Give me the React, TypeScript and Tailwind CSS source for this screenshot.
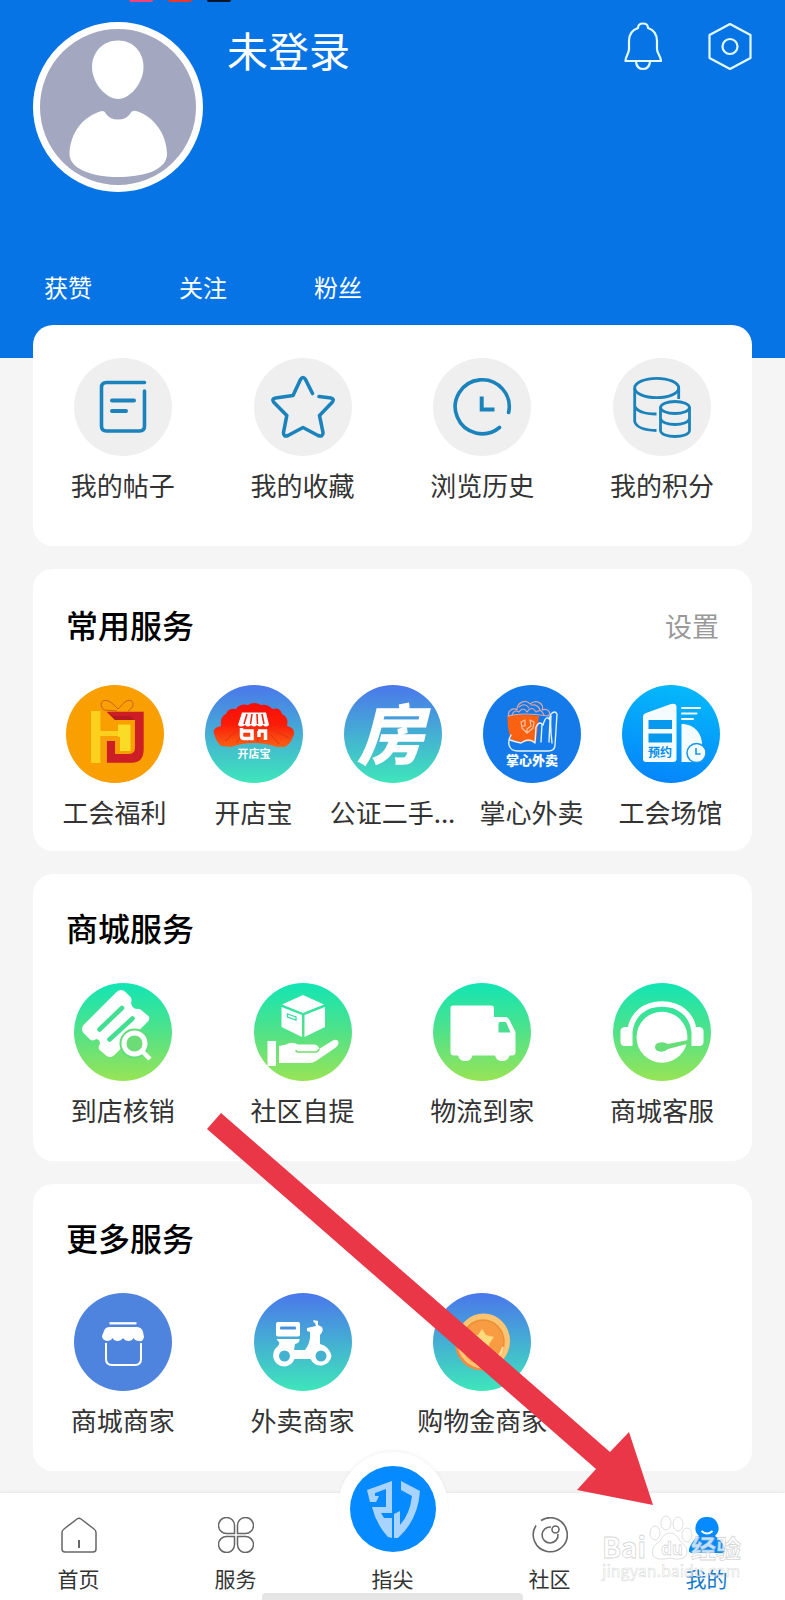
import React from 'react';

type Service = {
    name: string;
    icon: React.ReactNode;
};

const PostIcon = () => (
    <svg viewBox="0 0 98 98" className="size-[98px]" fill="none" stroke="#1b83bb" strokeWidth="3.6" strokeLinecap="round">
        <circle cx="49" cy="49" r="49" fill="#efefef" stroke="none" />
        <path d="M70.5 24.5H32.5Q27.5 24.5 27.5 29.5V68Q27.5 73 32.5 73H65.5Q70.5 73 70.5 68V33" />
        <path d="M38 42.5H60M38 53H52" strokeWidth="4" />
    </svg>
);

const StarIcon = () => (
    <svg viewBox="0 0 98 98" className="size-[98px]" fill="none" stroke="#1b83bb" strokeWidth="3.6" strokeLinecap="round" strokeLinejoin="round">
        <circle cx="49" cy="49" r="49" fill="#efefef" stroke="none" />
        <path d="M58.5 35.5L51.5 21.5Q49 17.5 46.5 21.5L39 37.5L21.5 40Q17 41 20 44.5L32.8 57.5L29.5 74.5Q29.5 79.5 34 77.5L49 69.5L64 77.5Q69 79.5 69 74.5L65.5 57.5L78 44.5Q81 41 77 40L65 38.5" />
    </svg>
);

const HistoryIcon = () => (
    <svg viewBox="0 0 98 98" className="size-[98px]" fill="none" stroke="#1b83bb" strokeWidth="3.6" strokeLinecap="round">
        <circle cx="49" cy="49" r="49" fill="#efefef" stroke="none" />
        <path d="M75.6 54.5A27 27 0 1 0 66.5 69.5" />
        <path d="M48.7 38.5V51.5H61.5" strokeLinecap="butt" strokeWidth="4" />
    </svg>
);

const PointsIcon = () => (
    <svg viewBox="0 0 98 98" className="size-[98px]" fill="none" stroke="#1b83bb" strokeWidth="2.8">
        <circle cx="49" cy="49" r="49" fill="#efefef" stroke="none" />
        <ellipse cx="43.7" cy="30" rx="22" ry="9.7" />
        <path d="M21.7 30V63.5Q24 72 43.5 72.5M21.7 48Q25 56 43.5 56M65.7 30V41" />
        <ellipse cx="62" cy="49.5" rx="14.5" ry="6" />
        <path d="M47.5 49.5V72.5C48 80.5 76 80.5 76.5 72.5V49.5M47.5 60.5C49 68.5 75 68.5 76.5 60.5" />
    </svg>
);

const WelfareIcon = () => (
    <svg viewBox="0 0 98 98" className="size-[98px]">
        <circle cx="49" cy="49" r="49" fill="#fa9f02" />
        <path d="M51 26L38 25C34 21 34 16 39 15.5C44 15 49 21 52 24C56 20 60 14 65 15.5C69 18 67 23 62 26" fill="none" stroke="#c8611a" strokeWidth="1" />
        <path d="M25 26H34.5V46H52V51H34.5V78H25Z" fill="#fcd01d" />
        <path d="M40.7 26.7H77.7V64Q77.7 77.7 66 77.7H40.7V56H49V69H62Q69 69 69 63V35H49Z" fill="#cc1e24" />
        <path d="M34.5 51H41V78L34.5 75Z" fill="#f3a30e" opacity=".7" />
        <path d="M52 39.5H64.5V66H54V52H52Z" fill="#fadb25" />
        <path d="M40.7 26.7L49 35H69L64 31H47Z" fill="#9e151c" opacity=".45" />
    </svg>
);

const ShopBaoIcon = () => (
    <svg viewBox="0 0 98 98" className="size-[98px]">
        <defs>
            <linearGradient id="skyMint" x2="0" y2="1">
                <stop stopColor="#4b77eb" />
                <stop offset="1" stopColor="#3ee6ba" />
            </linearGradient>
            <linearGradient id="shell" x2="0" y2="1">
                <stop stopColor="#f90d05" />
                <stop offset=".5" stopColor="#fb1d08" />
                <stop offset="1" stopColor="#fb6214" />
            </linearGradient>
        </defs>
        <circle cx="49" cy="49" r="49" fill="url(#skyMint)" />
        <path d="M16 61C11 56 10 52 8.5 46Q10 42 16 41Q15 31 21 29Q23 23 31 24Q35 18 43 20Q49 16 56 20Q63 19 67 24Q75 22 77 29Q84 32 82 41Q90 43 89 49Q86 59 80 62L72 62Q48 54 26 62Z" fill="url(#shell)" />
        <path d="M20 56L33 45M31 58L38 50M66 50L74 59M68 45L84 53M53 57L52 50M44 57L46 51" stroke="#d93611" strokeWidth="1" />
        <path d="M37 27.5H61L64 40Q61 43 58 40Q55 43 52 40Q49 43 46 40Q43 43 40 40Q36 43 33 40Z" fill="#fff" />
        <path d="M42 29L39 39M47 29L45.5 39M52 29L52.5 39M57 29L59 39" stroke="#ec2716" strokeWidth="1.6" />
        <path d="M36.5 43V51Q36.5 53.5 39 53.5H47V46H37M53 46H60.5V55M54 46V52" fill="none" stroke="#fff" strokeWidth="3.5" />
        <text x="49" y="73" textAnchor="middle" fill="#fff" fontSize="11" fontWeight="700">开店宝</text>
    </svg>
);

const HouseIcon = () => (
    <svg viewBox="0 0 98 98" className="size-[98px]">
        <circle cx="49" cy="49" r="49" fill="url(#skyMint)" />
        <text x="46" y="74" textAnchor="middle" fill="#fff" fontSize="66" fontWeight="900" fontStyle="italic">房</text>
    </svg>
);

const TakeoutIcon = () => (
    <svg viewBox="0 0 98 98" className="size-[98px]" fill="none" strokeLinejoin="round" strokeLinecap="round">
        <circle cx="49" cy="49" r="49" fill="#147ae9" />
        <path d="M24.5 31Q39 28 56 31L53 57Q44 56 38 57L28 55Q24 43 24.5 31Z" fill="#fb6111" />
        <g stroke="#d9a7a5" strokeWidth="1.2">
            <path d="M26 31C24 26 30 22 34 25C34 17 43 14 47 19C54 13 62 20 59 25C65 23 69 28 65 31" />
            <path d="M29 30Q31 24 36 27Q40 21 44 27Q49 20 53 27Q58 23 61 30M36 22Q42 17 46 23M48 20Q55 19 57 25" />
            <path d="M25 31Q40 27 65 31" />
        </g>
        <path d="M42 35L38 37L39 43L44 48L50 43L51 37L47 35M42 35V41H39M47 35L48 41L44 44V48" stroke="#f5c5a6" strokeWidth="1.2" />
        <path d="M28 50C24 57 25 66 35 66H65Q72 66 72 60L74 29Q72 25 68 29L66 34M27 55Q33 57 38 58Q46 52 52 58L53 42Q56 36 59 39L58 57M60 40Q63 29 67 35L66 57M68 31Q67 43 69 58" stroke="#e3f2ff" strokeWidth="1.4" />
        <text x="49" y="80" textAnchor="middle" fill="#fff" fontSize="13" fontWeight="900">掌心外卖</text>
    </svg>
);

const VenueIcon = () => (
    <svg viewBox="0 0 98 98" className="size-[98px]">
        <defs>
            <linearGradient id="venue" x1=".6" x2=".4" y2="1">
                <stop stopColor="#05b9fa" />
                <stop offset="1" stopColor="#0585fb" />
            </linearGradient>
        </defs>
        <circle cx="49" cy="49" r="49" fill="url(#venue)" />
        <path d="M21 32Q21 29 24 28L49 19Q54.5 18 54.5 22V74Q54.5 77 51 77H24Q21 77 21 74Z" fill="#f4fcff" />
        <path d="M26.5 35H50V44H26.5ZM26.5 48.5H50V57.5H26.5Z" fill="#0799ee" />
        <path d="M60 23H78M60 28.500H74.500M60 34H71" stroke="#f4fcff" strokeWidth="2" strokeLinecap="round" />
        <path d="M59.5 39C72 39 80 48 80 60V77H59.5Z" fill="#f4fcff" />
        <circle cx="74.5" cy="68" r="9.5" fill="#f4fcff" stroke="#1597ee" strokeWidth="1.5" />
        <path d="M74 63V69H78.5" fill="none" stroke="#1597ee" strokeWidth="1.6" />
        <text x="38" y="72" textAnchor="middle" fill="#078eeb" fontSize="12" fontWeight="700">预约</text>
    </svg>
);

const TicketIcon = () => (
    <svg viewBox="0 0 98 98" className="size-[98px]" strokeLinecap="round" strokeLinejoin="round">
        <defs>
            <linearGradient id="lime" x2="0" y2="1">
                <stop stopColor="#12e5b5" />
                <stop offset=".5" stopColor="#51e288" />
                <stop offset="1" stopColor="#98e455" />
            </linearGradient>
        </defs>
        <circle cx="49" cy="49" r="49" fill="url(#lime)" />
        <path d="M43 10Q47 6 51 10L56 15Q57 17 56 20Q57 26 62 27Q66 26 68 29L74 34Q75 36 73 38L39 72Q36 74 33 72L26 66Q25 64 27 61Q27 55 22 55Q18 58 16 55L10 49Q8 46 10 43Z" fill="#fff" stroke="#fff" strokeWidth="2" />
        <path d="M48 25L25.5 46.5M58.500 35.500L35.500 56.500" stroke="#42df92" strokeWidth="4.6" />
        <circle cx="60.5" cy="60.5" r="15" fill="#62dd79" />
        <circle cx="60.5" cy="60.5" r="10.5" fill="#6bdc76" stroke="#fff" strokeWidth="5" />
        <path d="M69 69L76 76" stroke="#fff" strokeWidth="4.5" strokeLinecap="butt" />
    </svg>
);

const PickupIcon = () => (
    <svg viewBox="0 0 98 98" className="size-[98px]">
        <circle cx="49" cy="49" r="49" fill="url(#lime)" />
        <path d="M49 12L70 21.5L49 30L28 21.5ZM27.5 24L48 32V54L27.5 44ZM71 24L50.5 32V54L71 44Z" fill="#fff" />
        <path d="M33.5 31L42 34V37L33.5 34Z" fill="none" stroke="#35db9c" strokeWidth="1.3" />
        <path d="M13.5 58H22V83H13.5Z" fill="#fff" />
        <path d="M25 63L32 61.5Q38 58 44 61.5H60Q65 62 65 66L78 58Q83 55 84.5 59Q85 62 81 65L62 78Q59 80 55 80H25Z" fill="#fff" />
        <path d="M42 67Q42 69 44 69H62Q65 68 65 66" fill="none" stroke="#6fdf6c" strokeWidth="1.5" />
    </svg>
);

const TruckIcon = () => (
    <svg viewBox="0 0 98 98" className="size-[98px]">
        <circle cx="49" cy="49" r="49" fill="url(#lime)" />
        <path d="M20 22.5H58Q61 22.5 61 25.5V34H72Q75 34 76.5 37L81 46Q82.5 48 82.5 50V69Q82.5 72.5 79 72.5H76.5A7.5 7.5 0 0 1 62 72.5H39.5A7.5 7.5 0 0 1 25 72.5H21Q17.5 72.5 17.5 69V25Q17.5 22.5 20 22.5Z" fill="#fff" />
        <path d="M67 39H73L77.5 49.5H65.5V41Q65.5 39 67 39Z" fill="#48df90" />
    </svg>
);

const SupportIcon = () => (
    <svg viewBox="0 0 98 98" className="size-[98px]">
        <circle cx="49" cy="49" r="49" fill="url(#lime)" />
        <path d="M17 48C19 31 32 21 49 21S79 31 81 48" fill="none" stroke="#fff" strokeWidth="5.5" />
        <path d="M19.5 44V63H11Q7.500 62 7.500 59V48Q7.500 45 11 44ZM78.500 44V63H87Q90.500 62 90.500 59V48Q90.500 45 87 44Z" fill="#fff" />
        <circle cx="49" cy="54.3" r="25.5" fill="#fff" />
        <path d="M75 57L55 61Q50 58 45 60Q42 61 42 64T45 68Q51 70 55 66L74 61Z" fill="#68de79" />
    </svg>
);

const StallIcon = () => (
    <svg viewBox="0 0 98 98" className="size-[98px]" fill="none">
        <circle cx="49" cy="49" r="49" fill="#4f84de" />
        <path d="M35.5 30.3H62.5" stroke="#fff" strokeWidth="2.3" />
        <path d="M36 34H62Q68 34 69 39L70 44Q69 49 65 48Q61 48 59.5 45Q58 48 54.5 48Q51 48 49 45Q47 48 43.5 48Q40 48 38.5 45Q37 48 33 48Q28 47 28 43L30 38Q31 34 36 34Z" fill="#fff" />
        <path d="M32 50V66Q32 72 38 72H61Q67 72 67 66V50" stroke="#fff" strokeWidth="2" />
    </svg>
);

const ScooterIcon = () => (
    <svg viewBox="0 0 98 98" className="size-[98px]">
        <circle cx="49" cy="49" r="49" fill="url(#skyMint)" />
        <rect x="22" y="29" width="24" height="14.5" rx="2" fill="#fff" />
        <rect x="26" y="33.5" width="16" height="3" rx="1" fill="#4492de" />
        <path d="M22.5 46H45.5Q46 50 41 51L40 57H51Q55 52 56 45V39L53 38V35L62 33L61 30L59.500 29V27L64 28V32L68 34Q70 38 66 42V51Q75 53 77.500 63A11 11 0 0 1 56.500 66H40.500A11 11 0 1 1 23 54Q27 50 24 48Z" fill="#fff" />
        <circle cx="30.5" cy="63" r="5.5" fill="#43b2d0" />
        <circle cx="67" cy="63" r="5.5" fill="#43b2d0" />
    </svg>
);

const CoinIcon = () => (
    <svg viewBox="0 0 98 98" className="size-[98px]">
        <circle cx="49" cy="49" r="49" fill="url(#skyMint)" />
        <ellipse cx="49" cy="50" rx="27" ry="27.5" fill="#f18c42" />
        <ellipse cx="50.5" cy="48" rx="26.5" ry="27.5" fill="#fdc572" />
        <ellipse cx="50" cy="49" rx="21" ry="22" fill="#f89c43" stroke="#ec8e36" strokeWidth="1.5" />
        <path d="M49 36L53 42L61 44L56 51L57 59L49 56L41 59L42 51L37 44L45 42Z" fill="#ffda7b" />
        <path d="M70 54Q68 63 60 68" fill="none" stroke="#ffe4a0" strokeWidth="2" />
    </svg>
);

const shortcuts: Service[] = [
    { name: '我的帖子', icon: <PostIcon /> },
    { name: '我的收藏', icon: <StarIcon /> },
    { name: '浏览历史', icon: <HistoryIcon /> },
    { name: '我的积分', icon: <PointsIcon /> },
];

const common: Service[] = [
    { name: '工会福利', icon: <WelfareIcon /> },
    { name: '开店宝', icon: <ShopBaoIcon /> },
    { name: '公证二手...', icon: <HouseIcon /> },
    { name: '掌心外卖', icon: <TakeoutIcon /> },
    { name: '工会场馆', icon: <VenueIcon /> },
];

const mall: Service[] = [
    { name: '到店核销', icon: <TicketIcon /> },
    { name: '社区自提', icon: <PickupIcon /> },
    { name: '物流到家', icon: <TruckIcon /> },
    { name: '商城客服', icon: <SupportIcon /> },
];

const more: Service[] = [
    { name: '商城商家', icon: <StallIcon /> },
    { name: '外卖商家', icon: <ScooterIcon /> },
    { name: '购物金商家', icon: <CoinIcon /> },
];

const ServiceButton = ({ name, icon }: Service) => (
    <button type="button" className="flex flex-col items-center gap-[13px]">
        {icon}
        <span className="whitespace-nowrap text-[26px] leading-8 text-[#333]">{name}</span>
    </button>
);

const Header = () => (
    <header className="bg-[#0774e6] px-[33px] pb-[55px] text-white">
        <div className="flex h-[22px] items-start gap-[15px] pl-24">
            <span className="h-[2px] w-6 rounded-b bg-[#f0437a]" />
            <span className="h-[2px] w-6 rounded-b bg-[#e23a30]" />
            <span className="h-[2px] w-6 rounded-b bg-[#06142c]" />
        </div>
        <div className="flex items-start">
            <svg viewBox="0 0 170 170" className="size-[170px]" role="img" aria-label="头像">
                <circle cx="85" cy="85" r="81.500" fill="#a3a8c0" stroke="#fff" strokeWidth="7" />
                <path d="M85 18.500C101 18.500 110.500 31 110.500 45C110.500 61 97 77 85 77S59 61 59 45C59 31 69 18.500 85 18.500Z" fill="#fff" />
                <path d="M69 89Q72 89 73 92Q77 97.500 85 97.500T97 92Q99 88 103 89C121 94 134 113 134 132C134 149 108 155 85 155S36.500 148 36.500 132C37 111 50 94 69 89Z" fill="#fff" />
            </svg>
            <h1 className="ml-6 mt-[2px] text-[41px] leading-[50px] font-normal">未登录</h1>
            <div className="ml-auto flex gap-[46px]">
                <button type="button" aria-label="通知">
                    <svg viewBox="0 0 38 49" className="h-[49px] w-[38px]" fill="none" stroke="#e4fbff" strokeWidth="2.2" strokeLinejoin="round">
                        <path d="M14 6Q14 1.500 19 1.500T24 6C30 8 33 13 33 19V27C33 32 37 34 37 39H1.500C1.500 34 5 32 5 27V19C5 13 8 8 14 6Z" />
                        <path d="M12 40Q13 47 19 47T26 40" />
                    </svg>
                </button>
                <button type="button" aria-label="设置">
                    <svg viewBox="0 0 44 49" className="h-[49px] w-11" fill="none" stroke="#e4fbff" strokeWidth="2.2" strokeLinejoin="round">
                        <path d="M22 2L42.500 13V36L22 47L1.500 36V13Z" />
                        <circle cx="22" cy="24.5" r="7.5" />
                    </svg>
                </button>
            </div>
        </div>
        <div className="mt-[79px] flex gap-[87px] pl-[11px] text-2xl leading-8">
            <span>获赞</span>
            <span>关注</span>
            <span>粉丝</span>
        </div>
    </header>
);

const tabClass = 'flex flex-col items-center gap-[11px] text-[21px] leading-7 text-[#333]';

const TabBar = () => (
    <nav className="relative mt-[22px] grid grid-cols-5 items-end bg-white pb-2 shadow-[0_-1px_3px_rgba(0,0,0,0.06)]">
        <a href="#home" className={tabClass}>
            <svg viewBox="0 0 36 36" className="size-9" fill="none" stroke="#666" strokeWidth="1.5" strokeLinejoin="round">
                <path d="M16 2Q18 .5 20 2L33 12Q35 13.5 35 15.5V32Q35 35 32 35H4Q1 35 1 32V15.5Q1 13.5 3 12Z" />
                <path d="M18 23V31" strokeWidth="2" />
            </svg>
            首页
        </a>
        <a href="#services" className={tabClass}>
            <svg viewBox="0 0 36 36" className="size-9" fill="none" stroke="#666" strokeWidth="1.5">
                <path d="M16.5 16.5H9A8 8 0 1 1 16.5 9ZM19.5 16.5V9A8 8 0 1 1 27 16.5ZM16.5 19.5V27A8 8 0 1 1 9 19.5ZM19.5 19.5H27A8 8 0 1 1 19.5 27Z" />
            </svg>
            服务
        </a>
        <a href="#finger" className="-mt-[41px] flex flex-col items-center gap-[2px] text-[21px] leading-7 text-[#333]">
            <span className="flex size-[110px] items-center justify-center rounded-full bg-white pt-1 shadow-[0_-2px_3px_rgba(0,0,0,0.04)]">
                <svg viewBox="0 0 86 86" className="size-[86px]" fill="#a9d3ff">
                    <circle cx="43" cy="43" r="43" fill="#058bff" />
                    <path d="M17 24L42 15V47H31L34 52H42V72L38 71Q26 58 22 41H36V23L25 27V30H29L26 36H20Z" />
                    <path d="M51 15L70 25Q68 54 48 72H44V48L50 45V59Q60 48 62 30L51 24Z" />
                </svg>
            </span>
            指尖
        </a>
        <a href="#community" className={tabClass}>
            <svg viewBox="0 0 36 36" className="size-9" fill="none" stroke="#666" strokeWidth="1.6">
                <path d="M9 3.5A17 17 0 1 1 4 8.5" />
                <path d="M19 10A8 8 0 1 0 26 17" />
                <circle cx="23.5" cy="12.5" r="3.5" />
            </svg>
            社区
        </a>
        <a href="#mine" aria-current="page" className="flex flex-col items-center gap-[11px] text-[21px] leading-7 text-[#1479c9]">
            <svg viewBox="0 0 36 36" className="size-9">
                <path d="M18 0A11 11 0 0 1 26 19Q33 23 36 32Q37 36 33 36H3Q-1 36 0 32Q3 23 10 19A11 11 0 0 1 18 0Z" fill="#058bff" />
                <path d="M12.5 14Q18 19 23.5 14" fill="none" stroke="#fff" strokeWidth="2" />
            </svg>
            我的
        </a>
        <Watermark />
        <div className="absolute bottom-0 left-1/3 h-[7px] w-1/3 rounded-t bg-[#e5e5e5]" />
    </nav>
);

const Watermark = () => (
    <svg viewBox="0 0 150 70" className="pointer-events-none absolute right-[35px] top-[20px] h-[70px] w-[150px]" fill="#fff" fillOpacity=".75" stroke="#bbb" strokeOpacity=".6" strokeWidth=".8">
        <text x="2" y="45" fontSize="28" fontWeight="700">Bai</text>
        <path d="M70 20Q76 20 80 28Q90 35 86 43Q82 48 70 45Q58 48 53 43Q50 34 60 28Q64 20 70 20Z" />
        <ellipse cx="55" cy="20" rx="5" ry="7" />
        <ellipse cx="66" cy="10" rx="5" ry="7" />
        <ellipse cx="78" cy="11" rx="5" ry="7" />
        <ellipse cx="87" cy="22" rx="5" ry="7" />
        <text x="61" y="42" fontSize="17" fontWeight="700">du</text>
        <text x="91" y="45" fontSize="25" fontWeight="700">经验</text>
        <text x="2" y="64" fontSize="16" strokeWidth=".5">jingyan.baidu.com</text>
    </svg>
);

const App = () => {
    return (
        <div className="relative flex min-h-screen flex-col overflow-hidden bg-[#f5f5f5] font-['Noto_Sans_CJK_SC',sans-serif]">
            <Header />
            <main className="-mt-[33px] flex flex-col gap-[23px] px-[33px]">
                <section className="grid grid-cols-4 rounded-[20px] bg-white pb-[45px] pt-[33px]">
                    {shortcuts.map((item) => <ServiceButton key={item.name} {...item} />)}
                </section>

                <section className="rounded-[20px] bg-white pb-[23px] pt-[33px]">
                    <div className="flex items-center justify-between px-[33px]">
                        <h2 className="text-[32px] leading-10 font-medium text-black">常用服务</h2>
                        <button type="button" className="pt-1 text-[27px] leading-10 text-[#999]">设置</button>
                    </div>
                    <div className="mt-[39px] grid grid-cols-5 px-3">
                        {common.map((item) => <ServiceButton key={item.name} {...item} />)}
                    </div>
                </section>

                <section className="rounded-[20px] bg-white pb-[35px] pt-[33px]">
                    <h2 className="px-[33px] text-[32px] leading-10 font-medium text-black">商城服务</h2>
                    <div className="mt-9 grid grid-cols-4">
                        {mall.map((item) => <ServiceButton key={item.name} {...item} />)}
                    </div>
                </section>

                <section className="rounded-[20px] bg-white pb-[35px] pt-[33px]">
                    <h2 className="px-[33px] text-[32px] leading-10 font-medium text-black">更多服务</h2>
                    <div className="mt-9 grid grid-cols-4">
                        {more.map((item) => <ServiceButton key={item.name} {...item} />)}
                    </div>
                </section>
            </main>
            <TabBar />

            {/* pointer towards the profile tab */}
            <svg viewBox="0 0 446 392" className="pointer-events-none absolute bottom-[95px] right-[132px] h-[392px] w-[446px]">
                <path d="M14 0L403 339L422 319L446 392L370 377L389 356L0 16Z" fill="#e93748" />
            </svg>
        </div>
    );
};

export default App;
